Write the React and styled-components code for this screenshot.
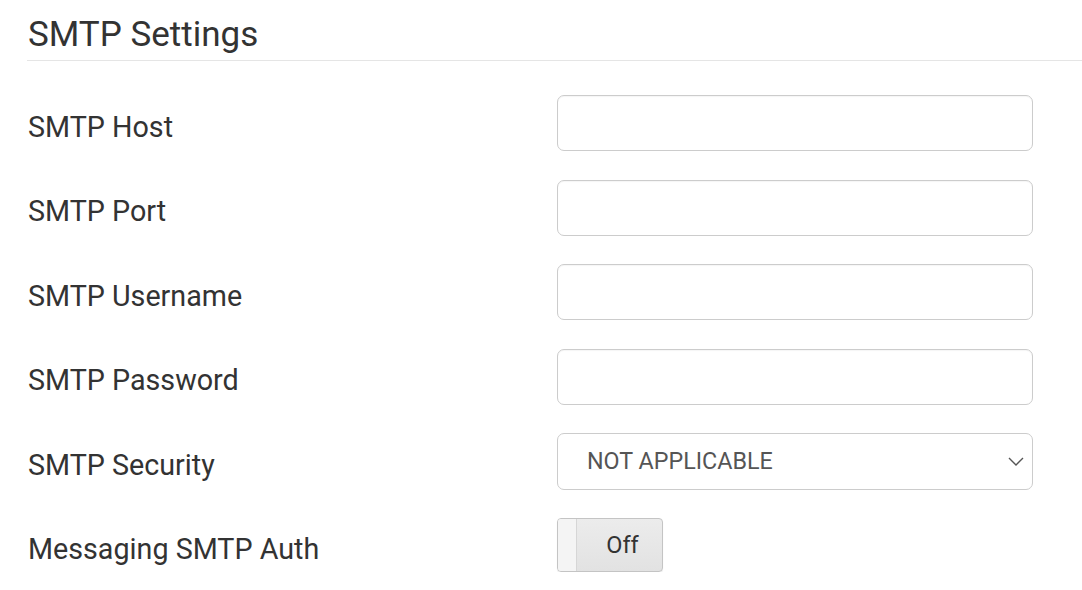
import React from "react";
import styled, { createGlobalStyle } from "styled-components";

const Global = createGlobalStyle`
  html, body { margin: 0; padding: 0; background: #fff; }
  body { font-family: Roboto, "Liberation Sans", sans-serif; color: #333; }
`;

const Page = styled.div`
  padding-left: 27px;
`;

const Heading = styled.h2`
  margin: 0;
  padding: 14px 0 4px 1px;
  font-size: 35px;
  font-weight: 400;
  line-height: 42px;
  color: #333;
  border-bottom: 1px solid #e5e5e5;
`;

const Form = styled.div`
  display: flex;
  flex-direction: column;
  gap: 28.5px;
  padding-top: 34px;
  padding-left: 1px;
`;

const Row = styled.div`
  display: grid;
  grid-template-columns: 529px 476px;
  align-items: center;
`;

const Label = styled.label`
  font-size: 28.7px;
  color: #333;
  padding-top: 7px;
`;

const Input = styled.input`
  box-sizing: border-box;
  width: 100%;
  height: 56px;
  border: 1px solid #ccc;
  border-radius: 7px;
  background: #fff;
  box-shadow: inset 0 1px 1px rgba(0, 0, 0, 0.04);
  font: inherit;
  outline: none;
`;

const SelectBox = styled.div`
  box-sizing: border-box;
  height: 56.5px;
  border: 1px solid #ccc;
  border-radius: 7px;
  background: #fff;
  display: flex;
  align-items: center;
  justify-content: space-between;
  padding: 0 7px 0 29px;
  font-size: 23.3px;
  color: #555;
`;

const Toggle = styled.div`
  box-sizing: border-box;
  width: 106px;
  height: 54px;
  border: 1px solid #c4c4c4;
  border-radius: 4px;
  background: linear-gradient(#ececec, #e2e2e2);
  display: flex;
  align-items: stretch;
  overflow: hidden;
  box-shadow: 0 1px 1px rgba(0, 0, 0, 0.08);
`;

const Knob = styled.span`
  width: 18px;
  background: #f4f4f4;
  border-right: 1px solid #d6d6d6;
`;

const ToggleText = styled.span`
  flex: 1;
  display: flex;
  align-items: center;
  justify-content: center;
  font-size: 23.5px;
  color: #333;
  padding-left: 6px;
`;

const fields = ["SMTP Host", "SMTP Port", "SMTP Username", "SMTP Password"];

export default function App() {
  return (
    <>
      <Global />
      <Page>
        <Heading>SMTP Settings</Heading>
        <Form>
          {fields.map((f) => (
            <Row key={f}>
              <Label>{f}</Label>
              <Input type={f === "SMTP Password" ? "password" : "text"} />
            </Row>
          ))}
          <Row>
            <Label>SMTP Security</Label>
            <SelectBox>
              <span>NOT APPLICABLE</span>
              <svg width="18" height="12" viewBox="0 0 18 12" fill="none">
                <path d="M2 3l7 7 7-7" stroke="#555" strokeWidth="1.4" />
              </svg>
            </SelectBox>
          </Row>
          <Row>
            <Label>Messaging SMTP Auth</Label>
            <Toggle>
              <Knob />
              <ToggleText>Off</ToggleText>
            </Toggle>
          </Row>
        </Form>
      </Page>
    </>
  );
}
